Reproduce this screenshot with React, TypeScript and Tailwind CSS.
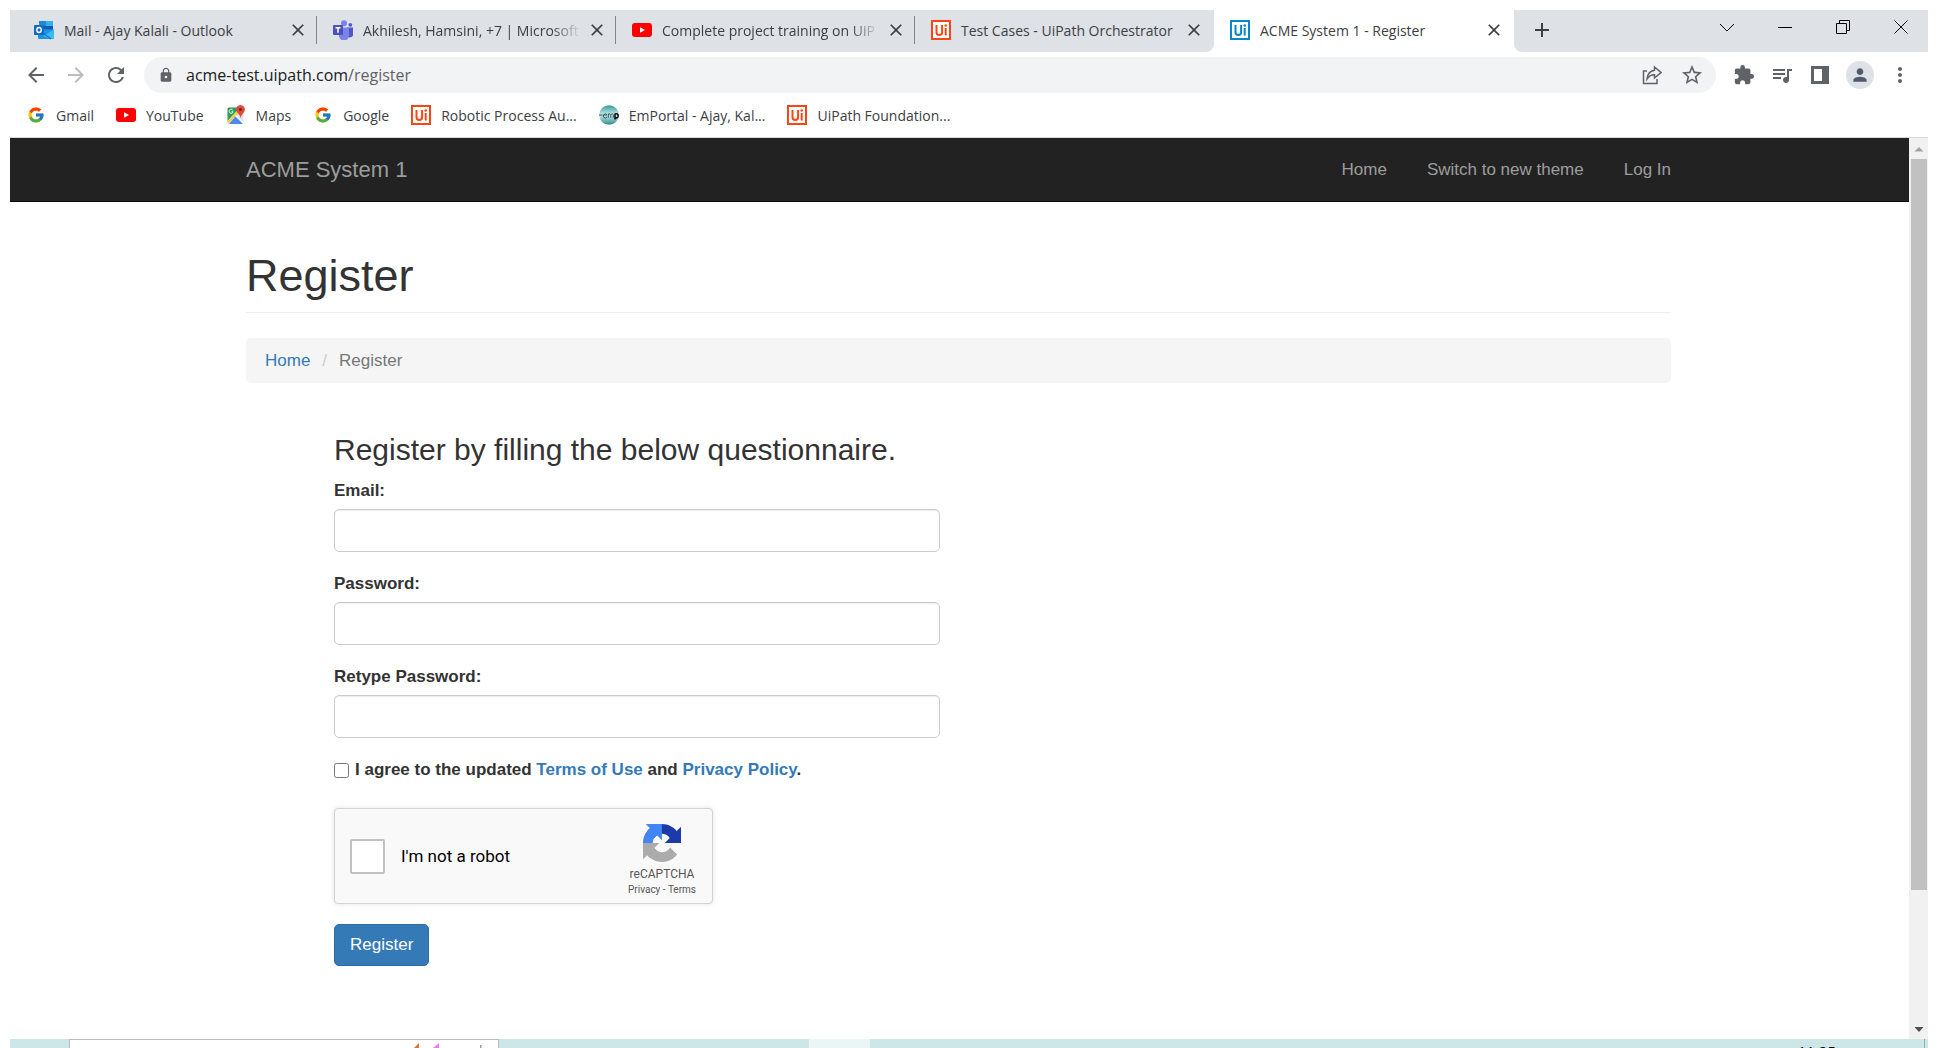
import React, { useId } from "react";
import {
  MdArrowBack,
  MdArrowForward,
  MdRefresh,
  MdLock,
  MdStarBorder,
  MdExtension,
  MdQueueMusic,
  MdPerson,
  MdMoreVert,
  MdClose,
  MdAdd,
} from "react-icons/md";
import { FcGoogle } from "react-icons/fc";

const OutlookIcon = () => (
  <svg viewBox="0 0 20 20" className="size-5 shrink-0" aria-hidden="true">
    <rect x="5" y="1" width="14" height="9" rx="1" fill="#0f5fae" />
    <rect x="5" y="1" width="7" height="5" fill="#1f86d8" />
    <rect x="12" y="1" width="7" height="5" fill="#37b0f2" />
    <path d="M4 9 20 9.5V18a1 1 0 0 1-1 1H5a1 1 0 0 1-1-1Z" fill="#1e93e4" />
    <path d="M20 9.5 9 16l8 3h2a1 1 0 0 0 1-1Z" fill="#36bdf4" />
    <path d="m5 10 12 8.9" stroke="#1673c4" strokeWidth="1.2" />
    <rect x="0" y="5" width="10" height="10" rx="1" fill="#0f6cc4" />
    <ellipse cx="5" cy="10" rx="2.2" ry="2.5" fill="none" stroke="#fff" strokeWidth="1.4" />
  </svg>
);

const TeamsIcon = () => (
  <svg viewBox="0 0 20 20" className="size-5 shrink-0" aria-hidden="true">
    <circle cx="17.3" cy="4.8" r="1.9" fill="#5059c9" />
    <path d="M14 7.5h6v6a3 3 0 0 1-6 1.5Z" fill="#5059c9" />
    <circle cx="11" cy="3.2" r="3" fill="#7b83eb" />
    <path d="M6 7.5h10v7a5 5 0 0 1-10 2Z" fill="#7b83eb" />
    <rect x="0" y="5" width="10" height="10" rx="1" fill="#4b53bc" />
    <path d="M2.5 7.7h5M5 7.7v5" stroke="#fff" strokeWidth="1.5" />
  </svg>
);

const YouTubeIcon = () => (
  <svg viewBox="0 0 20 20" className="size-5 shrink-0" aria-hidden="true">
    <rect x="0" y="3" width="20" height="14" rx="3" fill="#ff0000" />
    <path d="m8 7.2 5 2.8-5 2.8Z" fill="#fff" />
  </svg>
);

const MapsIcon = () => (
  <svg viewBox="0 0 20 20" className="size-5 shrink-0" aria-hidden="true">
    <rect x="1.5" y="2.5" width="16" height="16.5" rx="1.5" fill="#e3e3e3" />
    <path d="M1.5 4A1.5 1.5 0 0 1 3 2.5h11L1.5 16Z" fill="#2f9e57" />
    <path d="M9.5 11 17.5 18.5a1.5 1.5 0 0 1-1 .5H3Z" fill="#4a8af4" />
    <path d="M2 17.5 16 2.8" stroke="#f7cf45" strokeWidth="2.4" />
    <path d="m9.5 10.5 8 8" stroke="#fff" strokeWidth="1.2" />
    <path d="M6.9 5.3a2 2 0 1 0 .2 1.5H5.6" stroke="#fff" fill="none" />
    <path d="M14.5 0a4.5 4.5 0 0 1 4.4 5c-.3 2.7-3.5 4-4.2 8.3C14 9 10.4 7.7 10.1 5a4.5 4.5 0 0 1 4.4-5Z" fill="#dd4b3e" />
    <circle cx="14.5" cy="4.5" r="1.6" fill="#7d2119" />
  </svg>
);

const EmpIcon = () => {
  const id = useId();
  return (
    <svg viewBox="0 0 20 20" className="size-5 shrink-0" aria-hidden="true">
      <defs>
        <linearGradient id={id} x1="0" y1="0" x2="0" y2="1">
          <stop offset="0" stopColor="#2f9b9b" />
          <stop offset="0.5" stopColor="#cfeaea" />
          <stop offset="1" stopColor="#2a8a8c" />
        </linearGradient>
      </defs>
      <circle cx="10" cy="10" r="9.8" fill={`url(#${id})`} />
      <path d="M0 10h3.500M8 12a2 2 0 1 1 0-2H4.500M9.300 12.800V8.500m0 1.200q2-2 2.500 0v3m0-3q2-2 2.500 0v3" stroke="#235c5e" fill="none" />
      <path d="M16 14.500v-6m0 .5q3.200-1 3.200 1.800T16 12.600" stroke="#111" strokeWidth="1.6" fill="none" />
    </svg>
  );
};

const UiIcon = ({ blue = false }: { blue?: boolean }) => (
  <svg viewBox="0 0 20 20" className={blue ? "size-5 shrink-0 text-[#0a86d1]" : "size-5 shrink-0 text-[#fa4616]"} aria-hidden="true">
    <rect x="1" y="1" width="18" height="18" fill="#fff" stroke="currentColor" strokeWidth="2" />
    <path d="M5.500 5v7.200q0 2.800 2.800 2.800t2.800-2.800V5M14.700 8v7.500" stroke="currentColor" strokeWidth="2" fill="none" />
    <circle cx="14.7" cy="5.5" r="1.3" fill="currentColor" />
  </svg>
);

const RecaptchaLogo = () => (
  <svg viewBox="0 0 64 64" className="size-[38px]" aria-hidden="true">
    <path d="M64 31.955a33 33 0 0 0-.037-1.377V4.687l-7.158 7.158C50.947 4.674 42.033.093 32.050.093c-10.389 0-19.622 4.960-25.458 12.640l11.733 11.856a15.500 15.500 0 0 1 4.754-5.334c2.050-1.600 4.954-2.907 8.970-2.907.485 0 .860.057 1.135.163 4.976.393 9.288 3.140 11.828 7.124l-8.306 8.306L64 31.955" fill="#1c3aa9" />
    <path d="M31.862.094a33 33 0 0 0-1.377.037H4.594l7.158 7.158C4.580 13.147 0 22.060 0 32.045c0 10.388 4.960 19.622 12.640 25.458l11.856-11.733a15.500 15.500 0 0 1-5.334-4.754c-1.600-2.050-2.906-4.954-2.906-8.970 0-.485.056-.860.162-1.135.393-4.977 3.140-9.288 7.124-11.829l8.306 8.306.014-27.294" fill="#4285f4" />
    <path d="M.001 32.045c.001.461.013.920.037 1.376v25.891l7.158-7.158c5.858 7.171 14.772 11.752 24.756 11.752 10.389 0 19.622-4.960 25.458-12.640L45.677 39.410a15.500 15.500 0 0 1-4.754 5.334c-2.050 1.600-4.954 2.906-8.970 2.906-.485 0-.860-.056-1.135-.162-4.976-.393-9.288-3.140-11.828-7.124l8.306-8.306L.001 32.045" fill="#ababab" />
  </svg>
);

const ShareIcon = () => (
  <svg viewBox="0 0 20 20" className="size-5" fill="none" stroke="currentColor" strokeWidth="1.5" aria-hidden="true">
    <path d="M5 6H1.500v12.500H15V14M12.500 2l6.500 5.500-6.500 5.500v-3.200Q8 9.500 5 14q.5-7.500 7.500-8.800Z" />
  </svg>
);

type Tab = { title: string; icon: React.ReactNode };
const tabs: Tab[] = [
  { title: "Mail - Ajay Kalali - Outlook", icon: <OutlookIcon /> },
  { title: "Akhilesh, Hamsini, +7 | Microsoft", icon: <TeamsIcon /> },
  { title: "Complete project training on UiP", icon: <YouTubeIcon /> },
  { title: "Test Cases - UiPath Orchestrator", icon: <UiIcon /> },
];

const bookmarks: Tab[] = [
  { title: "Gmail", icon: <FcGoogle className="size-5 p-px" /> },
  { title: "YouTube", icon: <YouTubeIcon /> },
  { title: "Maps", icon: <MapsIcon /> },
  { title: "Google", icon: <FcGoogle className="size-5 p-px" /> },
  { title: "Robotic Process Au...", icon: <UiIcon /> },
  { title: "EmPortal - Ajay, Kal...", icon: <EmpIcon /> },
  { title: "UiPath Foundation...", icon: <UiIcon /> },
];

const tabBase = "flex w-[299px] items-center border-r border-[#80868b] pr-1.5 pl-4";
const tabLast = "flex w-[291px] items-center pl-4";
const tabTitle = "ml-2.5 min-w-0 flex-1 whitespace-nowrap";
const tabTitleFaded = "ml-2.5 min-w-0 flex-1 whitespace-nowrap mask-r-from-85% mask-r-to-98%";

function TabStrip() {
  return (
    <div className="flex h-[42px] items-stretch bg-[#dee1e6] pl-2 text-[14px] text-[#3c4043]">
      <div className="flex pt-1.5 pb-2">
        {tabs.map((tab, i) => (
          <div key={tab.title} className={i === 3 ? tabLast : tabBase}>
            {tab.icon}
            <span className={i === 1 || i === 2 ? tabTitleFaded : tabTitle}>{tab.title}</span>
            <button aria-label={`Close ${tab.title}`} className="p-0.5"><MdClose className="size-5" /></button>
          </div>
        ))}
      </div>
      <div className="flex bg-white">
        <div className="w-2 rounded-br-xl bg-[#dee1e6]" />
        <div className="flex w-[300px] items-center rounded-t-lg bg-white pr-2 pb-0.5 pl-4">
          <UiIcon blue />
          <span className={tabTitle}>ACME System 1 - Register</span>
          <button aria-label="Close ACME System 1 - Register" className="p-0.5"><MdClose className="size-5" /></button>
        </div>
        <div className="w-2 rounded-bl-xl bg-[#dee1e6]" />
      </div>
      <button aria-label="New tab" className="px-2 pb-0.5"><MdAdd className="size-6" /></button>
      <div className="ml-auto flex items-center gap-11 pr-5 pb-2 text-black">
        {[
          ["Search tabs", "M0 4l7 7 7-7"],
          ["Minimize", "M0 7.500h14"],
          ["Restore", "M.500 3.500h10v10h-10zM3.500 3V.500h10v10H11"],
          ["Close window", "M.500.500l13 13M13.500.500l-13 13"],
        ].map(([label, d]) => (
          <button key={label} aria-label={label}>
            <svg viewBox="0 0 14 14" className="size-3.5 overflow-visible" fill="none" stroke="currentColor"><path d={d} /></svg>
          </button>
        ))}
      </div>
    </div>
  );
}

function Toolbar() {
  return (
    <div className="flex h-[45px] items-center gap-4 pr-4 pl-3.5 text-[#5f6368]">
      <div className="flex items-center gap-4">
        <button aria-label="Back"><MdArrowBack className="size-6" /></button>
        <button aria-label="Forward" className="text-[#babcbe]"><MdArrowForward className="size-6" /></button>
        <button aria-label="Reload"><MdRefresh className="size-6" /></button>
      </div>
      <div className="flex h-9 flex-1 items-center rounded-full bg-[#f1f3f4] pr-3 pl-3.5">
        <MdLock className="size-4 shrink-0" />
        <div className="ml-3 flex-1 text-[16px] text-[#5f6368]">
          <span className="text-[#202124]">acme-test.uipath.com</span>/register
        </div>
        <button aria-label="Share"><ShareIcon /></button>
        <button aria-label="Bookmark this page" className="ml-[18px]"><MdStarBorder className="size-6" /></button>
      </div>
      <div className="flex items-center gap-3.5">
        <button aria-label="Extensions"><MdExtension className="h-[22px] w-6" /></button>
        <button aria-label="Media"><MdQueueMusic className="size-6" /></button>
        <button aria-label="Side panel" className="px-[3px]">
          <svg viewBox="0 0 18 18" className="size-[18px]"><path d="M1.500 1.500h15v15h-15z" fill="none" stroke="currentColor" strokeWidth="3" /><path d="M11 0h7v18h-7z" fill="currentColor" /></svg>
        </button>
        <button aria-label="Profile" className="rounded-full bg-[#dee1e6] p-1 text-[#4d5a70]"><MdPerson className="size-5" /></button>
        <button aria-label="Menu"><MdMoreVert className="size-6" /></button>
      </div>
    </div>
  );
}

function Bookmarks() {
  return (
    <nav aria-label="Bookmarks" className="flex h-[41px] items-center gap-[22px] border-b border-[#d5d7da] pb-1 pl-4 text-[14px] text-[#3c4043]">
      {bookmarks.map((b) => (
        <a key={b.title} href="#" className="flex items-center gap-2.5 whitespace-nowrap">{b.icon}{b.title}</a>
      ))}
    </nav>
  );
}

function Field({ label, type }: { label: string; type: string }) {
  const id = useId();
  return (
    <div className="mb-5">
      <label htmlFor={id} className="mb-1.5 block leading-6 font-bold">{label}</label>
      <input id={id} type={type} className="block h-[43px] w-full rounded-[5px] border border-[#ccc] px-4 shadow-[inset_0_1px_1px_rgba(0,0,0,0.075)]" />
    </div>
  );
}

function RegisterPage() {
  return (
    <div className="min-w-0 flex-1 font-['Liberation_Sans',Arial,sans-serif] text-[17px] leading-6 text-[#333]">
      <header className="border-b border-[#080808] bg-[#222] pr-0.5 text-[#9d9d9d]">
        <div className="mx-auto flex h-[63px] w-full max-w-[1425px] items-center justify-between">
          <a href="#" className="text-[22px]">ACME System 1</a>
          <nav className="flex gap-10">
            <a href="#">Home</a><a href="#">Switch to new theme</a><a href="#">Log In</a>
          </nav>
        </div>
      </header>
      <div className="pr-0.5">
        <main className="mx-auto w-full max-w-[1425px] pt-[49px]">
          <h1 className="border-b border-[#eee] pb-3 text-[45px] leading-[49px]">Register</h1>
          <nav aria-label="Breadcrumb" className="mt-[25px] flex h-[45px] items-center gap-3 rounded-[5px] bg-[#f5f5f5] px-[19px] text-[#777]">
            <a href="#" className="text-[#337ab7]">Home</a><span className="text-[#ccc]">/</span><span>Register</span>
          </nav>
          <form className="ml-[88px] w-[606px] max-w-full pt-[49px]" onSubmit={(e) => e.preventDefault()}>
            <h3 className="mb-[11px] text-[30px] leading-9 whitespace-nowrap">Register by filling the below questionnaire.</h3>
            <Field label="Email:" type="email" />
            <Field label="Password:" type="password" />
            <Field label="Retype Password:" type="password" />
            <div className="flex items-center gap-1.5 font-bold">
              <input id="agree" type="checkbox" className="size-[15px]" />
              <label htmlFor="agree">I agree to the updated <a href="#" className="text-[#337ab7]">Terms of Use</a> and <a href="#" className="text-[#337ab7]">Privacy Policy</a>.</label>
            </div>
            <div className="mt-[26px] flex h-[96px] w-[379px] items-center justify-between rounded-[4px] border border-[#d3d3d3] bg-[#f9f9f9] pr-4 pl-[15px] font-[Roboto,sans-serif] text-black shadow-[0_0_4px_1px_rgba(0,0,0,0.08)]">
              <div className="flex items-center gap-4">
                <input id="robot" type="checkbox" className="size-[35px] appearance-none rounded-[2px] border-2 border-[#c1c1c1] bg-white" />
                <label htmlFor="robot">I'm not a robot</label>
              </div>
              <div className="flex flex-col items-center pt-2 text-[#555]">
                <RecaptchaLogo />
                <span className="mt-0.5 text-[12px] leading-5">reCAPTCHA</span>
                <span className="text-[10px] leading-3"><a href="#">Privacy</a> - <a href="#">Terms</a></span>
              </div>
            </div>
            <button className="mt-5 rounded-[5px] border border-[#2e6da4] bg-[#337ab7] px-[15px] py-2 text-white">Register</button>
          </form>
        </main>
      </div>
    </div>
  );
}

function Scrollbar() {
  return (
    <div className="flex w-[19px] flex-col items-center justify-between bg-[#f1f1f1]">
      <div className="flex w-full flex-1 flex-col items-center">
        <svg viewBox="0 0 19 21" className="h-[21px] w-[19px]"><path d="M5.500 13.500h9L10 9Z" fill="#a3a3a3" /></svg>
        <div className="h-[731px] w-4 bg-[#c1c1c1]" />
      </div>
      <svg viewBox="0 0 19 21" className="h-[21px] w-[19px]"><path d="M5.500 9h9L10 14Z" fill="#505050" /></svg>
    </div>
  );
}

function Taskbar() {
  return (
    <footer className="flex h-[9px] overflow-hidden bg-[#cde7e9]">
      <div className="ml-[59px] flex w-[430px] justify-end border-x border-t border-[#bbb] bg-white pr-3">
        <svg viewBox="0 0 72 8" className="h-2 w-[72px]" aria-hidden="true">
          <path d="M0 8 5 3v5Z" fill="#d9762f" />
          <path d="m19 8 6-5v5Z" fill="#e879f9" />
          <path d="M66 5h1.500v3H66Z" fill="#999" />
        </svg>
      </div>
      <div className="ml-[310px] w-[61px] bg-[#eaf5f6]" />
      <div className="mr-[3px] ml-auto flex border-r border-[#8fb0b4] pr-[88px]">
        <time className="pt-0.5 text-[15px] leading-5 text-black">11:25</time>
      </div>
    </footer>
  );
}

export default function App() {
  return (
    <div className="flex h-screen flex-col overflow-hidden bg-white px-2.5 pt-2.5 font-['Open_Sans',sans-serif]">
      <TabStrip />
      <Toolbar />
      <Bookmarks />
      <div className="flex min-h-0 flex-1">
        <RegisterPage />
        <Scrollbar />
      </div>
      <Taskbar />
    </div>
  );
}
